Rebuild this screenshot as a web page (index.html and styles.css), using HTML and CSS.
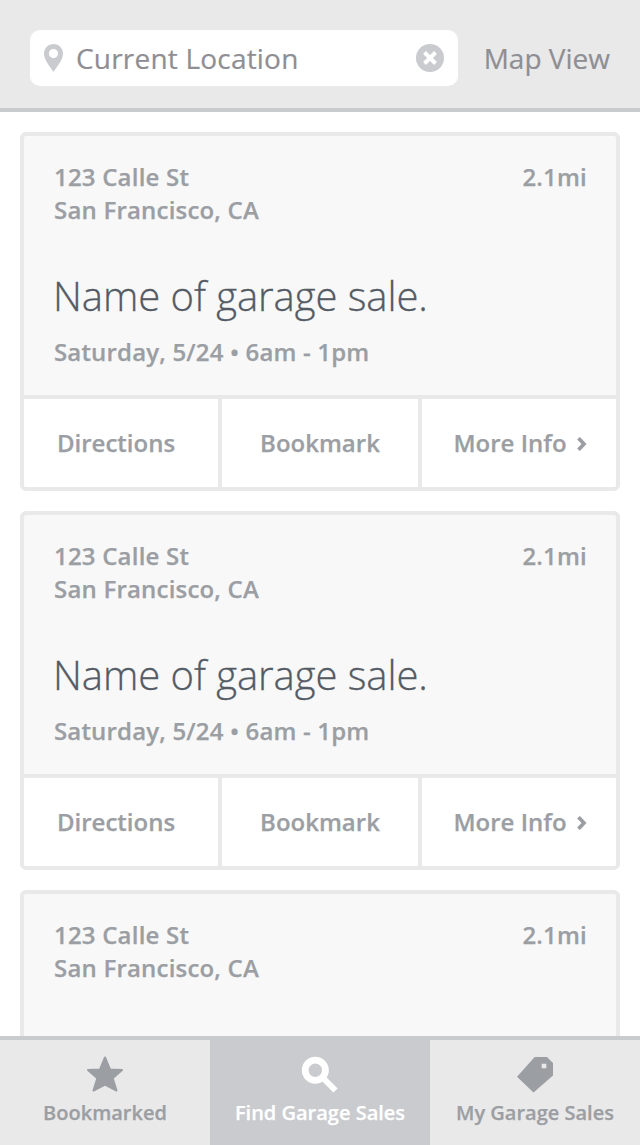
FILE: index.html
```html
<!DOCTYPE html>
<html lang="en">
<head>
<meta charset="utf-8">
<title>Garage Sales</title>
<link rel="stylesheet" href="styles.css">
</head>
<body>
<div class="app">
  <header class="topbar">
    <div class="search">
      <svg class="pin" width="20" height="28" viewBox="0 0 20 28"><path fill-rule="evenodd" d="M9.500 0C4.200 0 0 4.200 0 9.500 0 15.500 5 21 9.500 28 14 21 19 15.500 19 9.500 19 4.200 14.800 0 9.500 0ZM9.500 5a4.600 4.600 0 1 1 0 9.200 4.600 4.600 0 0 1 0-9.200Z"/></svg>
      <span class="query">Current Location</span>
      <svg class="clear" width="28" height="28" viewBox="0 0 28 28"><circle cx="14" cy="14" r="14"/><path d="m8.500 8.500 11 11M19.500 8.500l-11 11"/></svg>
    </div>
    <a class="map-link">Map View</a>
  </header>
  <main class="list">
    <article class="card">
      <div class="info">
        <div class="place"><address>123 Calle St<br>San Francisco, CA</address><span>2.1mi</span></div>
        <h2>Name of garage sale.</h2>
        <p class="when">Saturday, 5/24 • 6am - 1pm</p>
      </div>
      <div class="actions"><a>Directions</a><a>Bookmark</a><a>More Info<svg width="10" height="14" viewBox="0 0 10 14"><path d="M1.500 1.200 7 7l-5.500 5.800"/></svg></a></div>
    </article>
    <article class="card">
      <div class="info">
        <div class="place"><address>123 Calle St<br>San Francisco, CA</address><span>2.1mi</span></div>
        <h2>Name of garage sale.</h2>
        <p class="when">Saturday, 5/24 • 6am - 1pm</p>
      </div>
      <div class="actions"><a>Directions</a><a>Bookmark</a><a>More Info<svg width="10" height="14" viewBox="0 0 10 14"><path d="M1.500 1.200 7 7l-5.500 5.800"/></svg></a></div>
    </article>
    <article class="card">
      <div class="info">
        <div class="place"><address>123 Calle St<br>San Francisco, CA</address><span>2.1mi</span></div>
      </div>
    </article>
  </main>
  <nav class="tabs">
    <a class="tab"><svg class="star" width="38" height="38" viewBox="0 0 38 38"><path d="m19 2.500 5 12 12 .500-9.300 8.200 3.800 12.300L19 29.500 7.500 35.500l3.800-12.300L2 15l12-.500Z"/></svg><span>Bookmarked</span></a>
    <a class="tab active"><svg width="38" height="38" viewBox="0 0 38 38"><circle class="lens" cx="14.300" cy="15.300" r="10.100"/><path class="handle" d="m20 21 14.500 14.500"/></svg><span>Find Garage Sales</span></a>
    <a class="tab"><svg width="38" height="38" viewBox="0 0 38 38"><path fill-rule="evenodd" d="M1 21.700 18.700 2H31l6 6v12.500L17.500 37.600ZM25.700 8.700v4.600h4.600V8.700Z"/></svg><span>My Garage Sales</span></a>
  </nav>
</div>
</body>
</html>
```
FILE: styles.css
```css
* { box-sizing: border-box; }
body { margin: 0; font-family: "Open Sans", "Noto Sans", sans-serif; color: #9b9ea3; background: #fff; }
svg { display: block; flex: none; }
.app { height: 1145px; display: flex; flex-direction: column; overflow: hidden; }
.topbar { height: 112px; flex: none; padding: 30px 30px 22px; display: flex; justify-content: space-between; background: #e9e9e9; border-bottom: 4px solid #c9cbcf; font-size: 28px; line-height: 56px; color: #8e8e93; -webkit-text-stroke: .2px currentColor; }
.search { width: 428px; height: 56px; padding: 0 14px; display: flex; align-items: center; background: #fff; border-radius: 10px; }
.pin { fill: #cacbcf; }
.query { flex: 1; margin-left: 12px; letter-spacing: .2px; }
.clear { fill: #cacbcf; stroke: #fff; stroke-width: 4; }
.clear circle { stroke: none; }
.list { flex: 1; min-height: 0; overflow: hidden; padding: 20px 20px 0; display: flex; flex-direction: column; gap: 20px; }
.card { height: 359px; flex: none; border: 4px solid #e9e9e9; border-radius: 6px; background: #f8f8f8; font-size: 24px; font-weight: 600; line-height: 33px; overflow: hidden; -webkit-text-stroke: .25px currentColor; }
.info { height: 259px; padding: 24px 29px 0 30px; letter-spacing: .2px; }
.place { display: flex; justify-content: space-between; }
address { font-style: normal; }
h2 { margin: 40px 0 0 -1px; font-size: 40px; line-height: 60px; font-weight: 300; letter-spacing: -.05px; color: #545b65; -webkit-text-stroke: .3px currentColor; }
.when { margin: 9px 0 0; letter-spacing: .17px; }
.actions { height: 92px; border-top: 4px solid #e9e9e9; background: #fff; display: grid; grid-template-columns: 198px 200px 194px; }
.actions a { display: flex; align-items: center; justify-content: center; padding-bottom: 2px; border-right: 4px solid #e9e9e9; }
.actions a:first-child { padding-right: 10px; }
.actions a:last-child { padding-left: 2px; border: 0; }
.actions svg { margin: 3px 0 0 10px; fill: none; stroke: #9b9ea3; stroke-width: 3.7; }
.tabs { height: 109px; flex: none; border-top: 4px solid #c9cbcf; background: #e9e9e9; display: grid; grid-template-columns: 210px 220px 210px; font-size: 20px; font-weight: 600; line-height: 28px; -webkit-text-stroke: .25px currentColor; }
.tab { display: flex; flex-direction: column; align-items: center; padding-top: 15px; gap: 6px; fill: #9b9ea3; }
.active { background: #cacbcf; color: #fff; }
.star { stroke: #9b9ea3; stroke-width: 2; stroke-linejoin: round; }
.lens, .handle { fill: none; stroke: #fff; stroke-width: 6.8; }
.handle { stroke-width: 6; }
```
